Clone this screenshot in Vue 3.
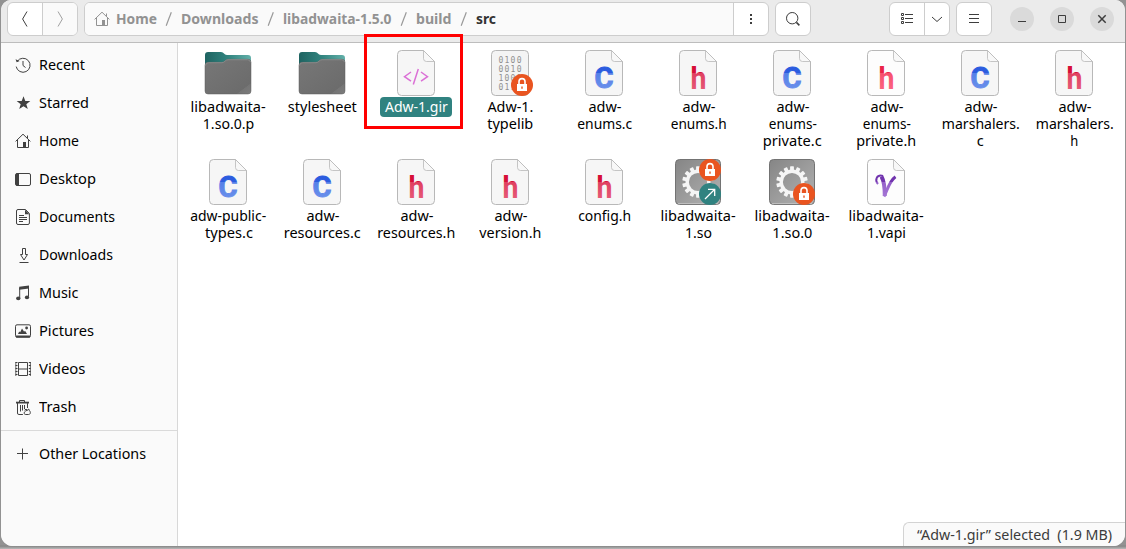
<script setup>
const places = [
  { id: 'recent', label: 'Recent', w: 46 },
  { id: 'starred', label: 'Starred', w: 50 },
  { id: 'home', label: 'Home', w: 40 },
  { id: 'desktop', label: 'Desktop', w: 57 },
  { id: 'documents', label: 'Documents', w: 76 },
  { id: 'downloads', label: 'Downloads', w: 74 },
  { id: 'music', label: 'Music', w: 39.5 },
  { id: 'pictures', label: 'Pictures', w: 55 },
  { id: 'videos', label: 'Videos', w: 46.5 },
  { id: 'trash', label: 'Trash', w: 37.5 },
]

const crumbs = [
  { label: 'Home', w: 41 },
  { label: 'Downloads', w: 77.5 },
  { label: 'libadwaita-1.5.0', w: 108.5 },
  { label: 'build', w: 35.5 },
  { label: 'src', w: 20, current: true },
]

const files = [
  { kind: 'folder', lines: [['libadwaita-', 75], ['1.so.0.p', 51.5]] },
  { kind: 'folder', lines: [['stylesheet', 69]] },
  { kind: 'markup', lines: [['Adw-1.gir', 63]], selected: true },
  { kind: 'binary', lines: [['Adw-1.', 46], ['typelib', 46]], lock: 'low' },
  { kind: 'c', lines: [['adw-', 33], ['enums.c', 55]] },
  { kind: 'h', lines: [['adw-', 33], ['enums.h', 56]] },
  { kind: 'c', lines: [['adw-', 33], ['enums-', 48], ['private.c', 59]] },
  { kind: 'h', lines: [['adw-', 33], ['enums-', 48], ['private.h', 60]], light: true },
  { kind: 'c', lines: [['adw-', 33], ['marshalers.', 78], ['c', 7]] },
  { kind: 'h', lines: [['adw-', 33], ['marshalers.', 78], ['h', 8]] },
  { kind: 'c', lines: [['adw-public-', 76], ['types.c', 48]] },
  { kind: 'c', lines: [['adw-', 33], ['resources.c', 77]] },
  { kind: 'h', lines: [['adw-', 33], ['resources.h', 78]] },
  { kind: 'h', lines: [['adw-', 33], ['version.h', 62]] },
  { kind: 'h', lines: [['config.h', 53]] },
  { kind: 'gear', lines: [['libadwaita-', 75], ['1.so', 27]], lock: 'high', link: true },
  { kind: 'gear', lines: [['libadwaita-', 75], ['1.so.0', 40]], lock: 'low' },
  { kind: 'v', lines: [['libadwaita-', 75], ['1.vapi', 39]], light: true },
]

const teeth = Array.from({ length: 14 }, (_, i) => (i * 360) / 14)

// Scales each label horizontally so it occupies its designed width.
const vFit = {
  mounted(el, { value }) {
    const natural = el.getBoundingClientRect().width
    if (natural) el.style.transform = `scaleX(${value / natural})`
  },
}
</script>

<template>
  <div class="desktop">
    <div class="window">
      <header class="headerbar">
        <div class="group nav">
          <button class="cell"><svg width="16" height="18" viewBox="0 0 16 18"><path d="M10 1.5 5.6 9 10 16.5" class="ln" /></svg></button>
          <button class="cell off"><svg width="16" height="18" viewBox="0 0 16 18"><path d="M6 1.5 10.4 9 6 16.5" class="ln" /></svg></button>
        </div>

        <div class="group pathbar">
          <div class="crumbs">
            <svg class="crumb-home" width="16" height="16" viewBox="0 0 16 16"><path d="M.6 8.4 8 1.2l7.4 7.2M2.5 7v7.5h11V7M12.5 2.5v3" class="ln" /><path d="M8 9h3v5.5H8z" class="fl" /></svg>
            <template v-for="(c, i) in crumbs" :key="c.label">
              <svg v-if="i" class="slash" width="8" height="16" viewBox="0 0 8 16"><path d="M6.3 1.2 1.2 14.8" /></svg>
              <span class="crumb" :class="{ current: c.current }" :style="{ width: c.w + 'px' }"><span v-fit="c.w" class="fit">{{ c.label }}</span></span>
            </template>
          </div>
          <button class="cell dots"><svg width="16" height="16" viewBox="0 0 16 16"><path d="M7 3h2v2H7zM7 7h2v2H7zM7 11h2v2H7z" class="fl" /></svg></button>
        </div>

        <div class="group search"><button class="cell"><svg width="16" height="16" viewBox="0 0 16 16"><circle cx="7.2" cy="7.2" r="5.7" class="ln" /><path d="m11.4 11.4 3 3" class="ln thick" /></svg></button></div>

        <div class="group view">
          <button class="cell"><svg width="16" height="16" viewBox="0 0 16 16"><path d="M2.5 2.5h2v2h-2zM2.5 6.5h2v2h-2zM2.5 10.5h2v2h-2zM6 3.5h8M6 7.5h8M6 11.5h8" class="ln" /></svg></button>
          <button class="cell narrow"><svg width="16" height="16" viewBox="0 0 16 16"><path d="m3 6 5 4.5L13 6" class="ln" /></svg></button>
        </div>
        <div class="group menu"><button class="cell"><svg width="16" height="16" viewBox="0 0 16 16"><path d="M3 3.5h10M3 7.5h10M3 11.5h10" class="ln" /></svg></button></div>

        <div class="controls">
          <button class="round"><svg width="16" height="16" viewBox="0 0 16 16"><path d="M4 10.5h8" class="ln" /></svg></button>
          <button class="round"><svg width="16" height="16" viewBox="0 0 16 16"><path d="M4.5 4.5h7v7h-7z" class="ln" /></svg></button>
          <button class="round"><svg width="16" height="16" viewBox="0 0 16 16"><path d="m4.3 4.3 7.4 7.4m0-7.4-7.4 7.4" class="ln thick" /></svg></button>
        </div>
      </header>

      <div class="body">
        <aside class="sidebar">
          <div v-for="p in places" :key="p.id" class="place">
            <svg width="16" height="16" viewBox="0 0 16 16">
              <g v-if="p.id === 'recent'" class="ln"><path d="M2.3 4.3A7 7 0 1 1 1.2 9.6" /><path d="M8 4v4.5l2.5 2" /><path d="m.5 2.2 1.2 3.1 3-1.3z" class="fl" /></g>
              <path v-else-if="p.id === 'starred'" class="fl" d="m8.5 1.3 1.8 4.8h5l-4 3.1 1.5 4.9-4.3-2.9-4.3 2.9 1.5-4.9-4-3.1h5z" />
              <g v-else-if="p.id === 'home'"><path d="M.6 8.4 8 1.2l7.4 7.2M2.5 7v7.5h11V7M12.5 2.5v3" class="ln" /><path d="M8 9h3v5.5H8z" class="fl" /></g>
              <g v-else-if="p.id === 'desktop'"><rect x=".5" y="2.5" width="15" height="12" rx="1.5" class="ln" /><path d="M1 2.5h3v12H1z" class="fl" /></g>
              <g v-else-if="p.id === 'documents'"><path d="M3 .5h7.500l3.900 4V14a1.500 1.500 0 0 1-1.400 1.500H3A1.500 1.500 0 0 1 1.500 14V2A1.500 1.500 0 0 1 3 .5zM4 6.500h5M4 8.500h8M4 10.500h8M4 12.500h4" class="ln" /><path d="M10 .8v4.400h4.400z" class="fl" /></g>
              <g v-else-if="p.id === 'downloads'" class="ln"><path d="M7.500 1.500h3v6h2L9 13 5.500 7.500h2zM4.500 15.500h9" /></g>
              <g v-else-if="p.id === 'music'"><path d="M4.700 13V3l8.800-1.300v10" class="ln" /><path d="M4.200 1.800 14 .5v3L4.200 4.700z" class="fl" /><ellipse cx="3.300" cy="13.400" rx="2.200" ry="1.800" class="fl" /><ellipse cx="12" cy="12.400" rx="2.200" ry="1.800" class="fl" /></g>
              <g v-else-if="p.id === 'pictures'"><rect x=".5" y="1.800" width="15" height="12.400" rx="1.500" class="ln" /><path d="M1 12.400h14v2H1zM3 11l1.200-2.400 1 .6L7 5.400l2 3.100 1.200-.6L12 11z" class="fl" /><circle cx="11.600" cy="5" r="1.400" class="fl" /></g>
              <g v-else-if="p.id === 'videos'" class="ln"><path d="M3.500 1.500h9v13h-9zM3.500 8h9" /><path d="M1.500 1v14M14.800 1v14" class="film" /><path d="M.8 1v14M15.400 1v14" class="thin" /></g>
              <g v-else><path d="M2.500 4v10a1.400 1.400 0 0 0 1.400 1.500h4M12.500 4.200V9M5.500 6v6.500M7.500 6v5.500M9.500 6v4M4.500 3V1.500h5V3" class="ln" /><path d="M1 2.700h13v1.800H1z" class="fl" /><path d="m9.500 11.200 1.500-1 1.400 1 1.400-1.100.4 1.200c2 2 1.100 4.200-.6 4.200h-2.800c-2.600 0-2.300-3.200 1.600-4.300" class="ln" /></g>
            </svg>
            <span v-fit="p.w" class="fit left">{{ p.label }}</span>
          </div>
          <div class="divider"></div>
          <div class="place other">
            <svg width="16" height="16" viewBox="0 0 16 16"><path d="M7.500 2.500v11M2 7.500h11" class="ln" /></svg>
            <span v-fit="107" class="fit left">Other Locations</span>
          </div>
        </aside>

        <main class="files">
          <div v-for="(f, n) in files" :key="n" class="file" :class="{ selected: f.selected }">
            <svg class="icon" width="48" height="48" viewBox="0 0 48 48">
              <defs>
                <linearGradient :id="'tab' + n"><stop offset="0" stop-color="#1e6361" /><stop offset=".5" stop-color="#31847f" /><stop offset="1" stop-color="#63b0a9" /></linearGradient>
                <linearGradient :id="'front' + n" x2="1" y2="1"><stop offset="0" stop-color="#777" /><stop offset=".84" stop-color="#6c6c6c" /><stop offset=".85" stop-color="#757575" /><stop offset="1" stop-color="#7c7c7c" /></linearGradient>
                <linearGradient :id="'metal' + n" x2="1" y2="1"><stop offset="0" stop-color="#858585" /><stop offset="1" stop-color="#b2b2b2" /></linearGradient>
                <linearGradient :id="'blue' + n" gradientUnits="userSpaceOnUse" x1="0" y1="0" x2="0" y2="48"><stop offset=".5" stop-color="#2c5cdf" /><stop offset=".5" stop-color="#5580e7" /><stop offset="1" stop-color="#7597ed" /></linearGradient>
                <linearGradient :id="'red' + n" gradientUnits="userSpaceOnUse" x1="0" y1="0" x2="0" y2="48"><stop offset=".5" :stop-color="f.light ? '#ea2448' : '#d60f37'" /><stop offset=".5" :stop-color="f.light ? '#f5506e' : '#df4060'" /><stop offset="1" :stop-color="f.light ? '#ff6d88' : '#e96580'" /></linearGradient>
                <linearGradient :id="'violet' + n" gradientUnits="userSpaceOnUse" x1="0" y1="0" x2="0" y2="48"><stop offset=".5" stop-color="#7134ae" /><stop offset=".5" stop-color="#9460c9" /><stop offset="1" stop-color="#ae83dc" /></linearGradient>
              </defs>

              <g v-if="f.kind === 'folder'">
                <path :fill="`url(#tab${n})`" d="M1 16V6a3 3 0 0 1 3-3h13c3 0 3 3 6 3h21a3 3 0 0 1 3 3v10H1z" />
                <path :fill="`url(#front${n})`" stroke="#5c5c5c" stroke-width=".5" d="M1 16.300a3 3 0 0 1 3-3h14c3 0 3-3 6-3h20a3 3 0 0 1 3 3V42a3 3 0 0 1-3 3H4a3 3 0 0 1-3-3z" />
                <path fill="none" stroke="#909090" stroke-width=".8" d="M1.500 16.500a3 3 0 0 1 3-2.800H18c3 0 3-3 6-3h19.500a3 3 0 0 1 3 2.500" />
              </g>
              <g v-else-if="f.kind === 'gear'">
                <rect x="1.500" y="1.500" width="45" height="45" rx="4" :fill="`url(#metal${n})`" stroke="#737373" />
                <path d="M4 45.600h40" stroke="#c2c2c2" />
                <g fill="#f5f5f5"><rect v-for="a in teeth" :key="a" x="22.100" y="8.300" width="3.800" height="5" rx=".6" :transform="`rotate(${a} 24 24)`" /></g>
                <circle cx="24" cy="24" r="10.800" fill="none" stroke="#f5f5f5" stroke-width="3.400" />
              </g>
              <rect v-else-if="f.kind === 'binary'" x="5.500" y="1.500" width="37" height="45" rx="4" fill="#f4f4f4" stroke="#b5b5b5" />
              <g v-else>
                <path d="M9.500 1.500h22l11 11v30a4 4 0 0 1-4 4h-29a4 4 0 0 1-4-4v-37a4 4 0 0 1 4-4z" :fill="f.light ? '#fdfdfd' : '#f6f6f6'" stroke="#b8b8b8" />
                <path d="M31.500 1.500V9.500a3 3 0 0 0 3 3h8z" fill="#f8f8f8" stroke="#b8b8b8" stroke-width=".8" />
              </g>

              <text v-if="f.kind === 'c'" class="glyph" x="24" y="39.200" textLength="19" lengthAdjust="spacingAndGlyphs" text-anchor="middle" font-size="29.500" :fill="`url(#blue${n})`" :stroke="`url(#blue${n})`" stroke-width="1">C</text>
              <text v-else-if="f.kind === 'h'" class="glyph" x="24.500" y="40" text-anchor="middle" font-size="31" textLength="16" lengthAdjust="spacingAndGlyphs" :fill="`url(#red${n})`">h</text>
              <g v-else-if="f.kind === 'v'" fill="none" :stroke="`url(#violet${n})`">
                <path d="M19.500 18.500c2.800 5 3.300 12 3.300 19.500" stroke-width="4" />
                <path d="M21 17.900c-6.500-1.500-8.500 4-5 8.100" stroke-width="2" />
                <path d="M22 38.500c3.500-6 4.800-15 11.500-19.800" stroke-width="3" />
              </g>
              <g v-else-if="f.kind === 'markup'" fill="none" stroke="#db70d6" stroke-width="1.500"><path d="m19 23-6.500 4.700 6.500 4.500M29 23l6.500 4.700-6.500 4.500M26.300 20l-5 15.500" /></g>
              <g v-else-if="f.kind === 'binary'" class="bits">
                <text v-for="(b, r) in ['0100', '0010', '1001', '0110']" :key="b" x="12.500" :y="14.200 + r * 9" textLength="23">{{ b }}</text>
              </g>

              <g v-if="f.lock" :transform="f.lock === 'low' ? 'translate(36 36)' : 'translate(36 12)'">
                <circle r="11" fill="#e95420" /><rect x="-5" y="-1" width="10" height="7" fill="#fff" /><path d="M-3-1v-2.400a3 3 0 0 1 6 0V-1" fill="none" stroke="#fff" stroke-width="1.600" /><path d="M-.7 1.500H.7v2.300H-.7z" fill="#e95420" />
              </g>
              <g v-if="f.link" transform="translate(36 36)"><circle r="11" fill="#308280" /><path d="M-5 5 4.500-4.500M-2-4.700h6.700V2" fill="none" stroke="#fff" stroke-width="1.300" /></g>
            </svg>
            <div class="name"><div v-for="([text, w], i) in f.lines" :key="i" class="line"><span v-fit="w" class="fit center">{{ text }}</span></div></div>
            <div v-if="f.selected" class="marker"></div>
          </div>
        </main>
      </div>
      <div class="status"><span v-fit="195" class="fit left">“Adw-1.gir” selected&nbsp; (1.9 MB)</span></div>
    </div>
  </div>
</template>

<style>
body { overflow: hidden; background: #aaa; }
</style>

<style scoped>
* { box-sizing: border-box; }
.desktop { width: 1126px; height: 549px; padding: 0 1px 3px; background: linear-gradient(to bottom, #929292 545px, #858585 546px, #b9b9b9 549px); font-family: "Noto Sans", "Open Sans", sans-serif; font-size: 14px; color: #000; }
.window { position: relative; height: 546px; background: #fff; border-radius: 10px 10px 12px 12px; overflow: hidden; display: flex; flex-direction: column; }
.headerbar { height: 43px; flex: none; display: flex; align-items: flex-start; padding: 2px 11px 0 6px; background: #ebebeb; border-bottom: 1px solid #bdbdbd; color: #3d3d3d; }
.group { display: flex; height: 34px; border: 1px solid #cdcdcd; border-radius: 6px; background: #fff; overflow: hidden; flex: none; }
button { border: 0; padding: 0; margin: 0; background: none; color: inherit; display: grid; place-items: center; }
.cell { flex: 1; }
.cell + .cell { border-left: 1px solid #cdcdcd; }
.off { color: #a0a0a0; background: #fafafa; }
.nav { width: 71px; }
.pathbar { width: 685px; margin-left: 6px; }
.crumbs { flex: 1; display: flex; align-items: center; padding-left: 9px; background: #fafafa; color: #929292; font-weight: 700; }
.crumb-home { margin-right: 6px; }
.crumb { flex: none; white-space: nowrap; line-height: 20px; }
.current { color: #333; }
.slash { margin: 0 8.200px; fill: none; stroke: #999; stroke-width: 1.200; }
.dots { flex: none; width: 35px; border-left: 1px solid #cdcdcd; }
.search { width: 36px; margin-left: 6px; }
.view { width: 61px; margin-left: 78px; }
.view .narrow { flex: none; width: 25px; }
.menu { width: 36px; margin-left: 6px; }
.controls { display: flex; gap: 16px; margin: 5px 0 0 auto; }
.round { width: 24px; height: 24px; border-radius: 50%; background: #dadada; }
svg { display: block; flex: none; }
.ln { fill: none; stroke: currentColor; stroke-width: 1; }
.thick { stroke-width: 1.500; }
.fl { fill: currentColor; stroke: none; }
.film { stroke-width: 2; stroke-dasharray: 1 2; }
.thin { stroke-width: .8; }
.body { flex: 1; min-height: 0; display: flex; }
.sidebar { width: 177px; flex: none; padding-top: 3px; background: #fafafa; border-right: 1px solid #d8d8d8; }
.place { height: 38px; display: flex; align-items: center; gap: 8px; padding-left: 14px; line-height: 20px; }
.place svg { color: #414141; }
.divider { height: 1px; background: #dadada; margin: 4px 0; }
.fit { display: inline-block; white-space: pre; transform-origin: left center; }
.fit.center { transform-origin: center center; }
.files { flex: 1; display: grid; grid-template-columns: repeat(10, 94px); grid-auto-rows: 109px; padding: 6px 0 0 3px; align-content: start; }
.file { position: relative; display: flex; flex-direction: column; align-items: center; }
.name { min-width: 20px; padding: 1px 4px 2px 5px; text-align: center; border-radius: 4px; }
.line { height: 17px; line-height: 17px; display: flex; justify-content: center; }
.selected .name { background: #308280; color: #fff; width: 72px; }
.marker { position: absolute; left: -5px; top: -15px; width: 99px; height: 95px; border: 3px solid #f00; z-index: 2; }
.glyph { font-family: Roboto, sans-serif; font-weight: 700; }
.bits { font-family: "DejaVu Sans Mono", monospace; font-size: 8px; fill: #909090; }
.status { position: absolute; right: 0; bottom: 0; width: 222px; height: 24px; padding-left: 13px; line-height: 23px; border: 1px solid #d3d3d3; border-width: 1px 0 0 1px; border-top-left-radius: 6px; background: #fafafa; color: #3c3c3c; }
</style>
